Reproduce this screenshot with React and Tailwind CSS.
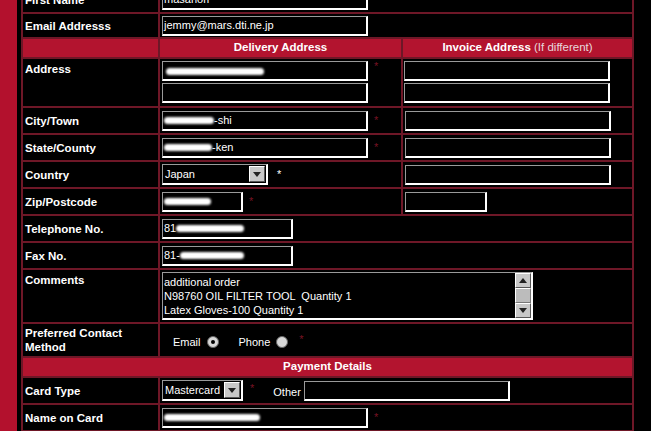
import React from "react";

const F = { fontFamily: '"Liberation Sans", Arial, sans-serif' };

function Blob({ w }) {
  return <span className="inline-block h-[7px] bg-white rounded-full blur-[0.8px] align-middle" style={{ width: w }} />;
}

function Box({ w, children, h = "h-[20px]" }) {
  return (
    <div
      className={`${h} bg-black border-t border-l border-t-[#9a9a9a] border-l-[#9a9a9a] border-b-2 border-r-2 border-b-white border-r-white flex items-center pl-[1px] text-[11px] text-white whitespace-nowrap overflow-hidden`}
      style={{ width: w }}
    >
      {children}
    </div>
  );
}

function Star({ white }) {
  return <span className={`text-[11px] ${white ? "text-white" : "text-[#7a1424]"} leading-none`}>*</span>;
}

function Label({ children, top }) {
  return (
    <div className={`bg-black text-white font-bold text-[11.5px] leading-[14px] px-[2px] flex ${top ? "items-start pt-[3px]" : "items-center"}`}>
      {children}
    </div>
  );
}

function Cell({ children, span, className = "" }) {
  return (
    <div className={`bg-black flex items-center pl-[2px] gap-[6px] ${span === 2 ? "col-span-2" : ""} ${className}`}>{children}</div>
  );
}

function Select({ w, text }) {
  return (
    <div className="h-[21px] bg-black border-t border-l border-t-[#9a9a9a] border-l-[#9a9a9a] border-b-2 border-r-2 border-b-white border-r-white flex items-center text-[11px] text-white" style={{ width: w }}>
      <span className="flex-1 pl-[2px]">{text}</span>
      <span className="w-[16px] h-[16px] bg-[#c8c8c8] border border-t-white border-l-white border-b-[#555] border-r-[#555] flex items-center justify-center mr-[1px]">
        <svg width="8" height="5" viewBox="0 0 8 5"><path d="M0 0h8L4 5z" fill="#222" /></svg>
      </span>
    </div>
  );
}

function Radio({ checked }) {
  return (
    <span className="inline-flex w-[12px] h-[12px] rounded-full bg-[#d8d8d8] border border-[#666] items-center justify-center">
      {checked && <span className="w-[4px] h-[4px] rounded-full bg-black" />}
    </span>
  );
}

export default function App() {
  return (
    <div className="w-[651px] h-[431px] bg-black overflow-hidden flex" style={F}>
      <div className="w-[17px] h-full bg-[#b3112d] shrink-0" />
      <div className="w-[4px] shrink-0" />
      <div className="shrink-0 self-start mt-[-14px] w-[613px] grid grid-cols-[135px_241px_229px] grid-rows-[24px_23px_18px_47px_25px_25px_25px_25px_25px_25px_52px_32px_18px_25px_25px_25px] gap-[2px] p-[2px] bg-[#6e1727]">
        {/* First Name */}
        <Label>First Name</Label>
        <Cell span={2} className="items-end pb-[2px]"><Box w={206}>masanori</Box></Cell>

        {/* Email */}
        <Label>Email Addresss</Label>
        <Cell span={2}><Box w={206}>jemmy@mars.dti.ne.jp</Box></Cell>

        {/* Header */}
        <div className="bg-[#b3142f]" />
        <div className="bg-[#b3142f] flex items-center justify-center text-white font-bold text-[11.5px]">Delivery Address</div>
        <div className="bg-[#b3142f] flex items-center justify-center text-white text-[11.5px]">
          <span className="font-bold">Invoice Address</span>&nbsp;<span className="text-[#e8d8dc]">(If different)</span>
        </div>

        {/* Address */}
        <Label top>Address</Label>
        <div className="bg-black flex flex-col gap-[2px] pl-[2px] pt-[2px]">
          <div className="flex gap-[6px] items-start">
            <Box w={206}><span className="ml-[2px]"><Blob w={98} /></span></Box>
            <Star />
          </div>
          <Box w={206}></Box>
        </div>
        <div className="bg-black flex flex-col gap-[2px] pl-[1px] pt-[2px]">
          <Box w={206}></Box>
          <Box w={206}></Box>
        </div>

        {/* City */}
        <Label>City/Town</Label>
        <Cell><Box w={206}><Blob w={50} />-shi</Box><Star /></Cell>
        <Cell className="pl-[1px]"><Box w={206}></Box></Cell>

        {/* State */}
        <Label>State/County</Label>
        <Cell><Box w={206}><Blob w={48} />-ken</Box><Star /></Cell>
        <Cell className="pl-[1px]"><Box w={206}></Box></Cell>

        {/* Country */}
        <Label>Country</Label>
        <Cell className="gap-[9px]"><Select w={106} text="Japan" /><Star white /></Cell>
        <Cell className="pl-[1px]"><Box w={206}></Box></Cell>

        {/* Zip */}
        <Label>Zip/Postcode</Label>
        <Cell><Box w={81}><Blob w={47} /></Box><Star /></Cell>
        <Cell className="pl-[1px]"><Box w={82}></Box></Cell>

        {/* Telephone */}
        <Label>Telephone No.</Label>
        <Cell span={2}><Box w={131}>81<Blob w={68} /></Box></Cell>

        {/* Fax */}
        <Label>Fax No.</Label>
        <Cell span={2}><Box w={131}>81-<Blob w={64} /></Box></Cell>

        {/* Comments */}
        <Label top>Comments</Label>
        <Cell span={2} className="items-start pt-[2px]">
          <div className="w-[371px] h-[48px] bg-black border-t border-l border-t-[#9a9a9a] border-l-[#9a9a9a] border-b-2 border-r-2 border-b-white border-r-white flex">
            <div className="flex-1 text-white text-[11px] leading-[14px] pl-[1px] pt-[2px] whitespace-pre">
              {"additional order\nN98760 OIL FILTER TOOL  Quantity 1\nLatex Gloves-100 Quantity 1"}
            </div>
            <div className="w-[16px] flex flex-col bg-[#d8d8d8]">
              <span className="h-[15px] bg-[#c8c8c8] border border-t-white border-l-white border-b-[#555] border-r-[#555] flex items-center justify-center">
                <svg width="8" height="5" viewBox="0 0 8 5"><path d="M4 0L8 5H0z" fill="#222" /></svg>
              </span>
              <span className="flex-1 bg-[#bcbcbc] border border-t-white border-l-white border-b-[#777] border-r-[#777]" />
              <span className="h-[15px] bg-[#c8c8c8] border border-t-white border-l-white border-b-[#555] border-r-[#555] flex items-center justify-center">
                <svg width="8" height="5" viewBox="0 0 8 5"><path d="M0 0h8L4 5z" fill="#222" /></svg>
              </span>
            </div>
          </div>
        </Cell>

        {/* Preferred */}
        <Label>Preferred Contact<br />Method</Label>
        <Cell span={2} className="pl-[13px] text-white text-[11px] gap-[3px] pt-[4px]">
          <span>Email</span><Radio checked />
          <span className="ml-[14px]">Phone</span><Radio />
          <span className="ml-[5px] mb-[6px]"><Star /></span>
        </Cell>

        {/* Payment header */}
        <div className="col-span-3 bg-[#b3142f] flex items-center justify-center text-white font-bold text-[11.5px]">Payment Details</div>

        {/* Card Type */}
        <Label>Card Type</Label>
        <Cell span={2} className="text-white text-[11px]">
          <Select w={81} text="Mastercard" />
          <span className="ml-[1px] mb-[4px]"><Star /></span>
          <span className="ml-[13px] mt-[4px]">Other</span>
          <span className="-ml-[3px]"><Box w={206}></Box></span>
        </Cell>

        {/* Name on Card */}
        <Label>Name on Card</Label>
        <Cell span={2}><Box w={206}><Blob w={96} /></Box><Star /></Cell>

        <div className="bg-black" />
        <Cell span={2} />
      </div>
    </div>
  );
}
